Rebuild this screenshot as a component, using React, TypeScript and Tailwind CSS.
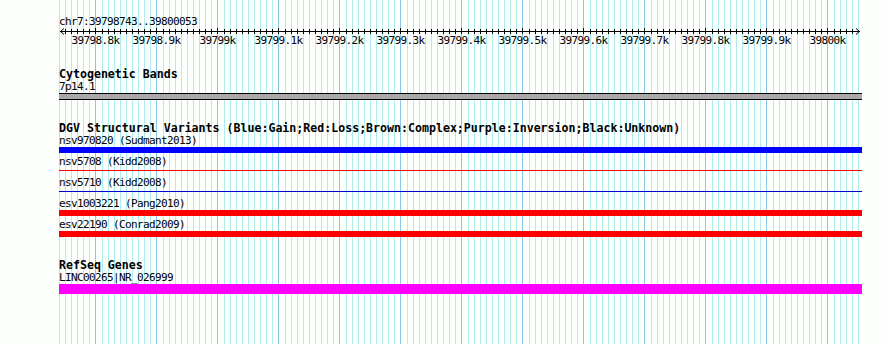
import React from 'react';

// grid + ruler geometry (page pixels)
const MAJOR_X = 95;
const STEP = 6.1;
const TICKS = Array.from({ length: 132 }, (_, i) => i - 6);
const tickX = (k: number) => Math.ceil(MAJOR_X + k * STEP);

const LABELS = [
  '39798.8k', '39798.9k', '39799k', '39799.1k', '39799.2k', '39799.3k', '39799.4k',
  '39799.5k', '39799.6k', '39799.7k', '39799.8k', '39799.9k', '39800k'
];

const mono = "font-['DejaVu_Sans_Mono','Liberation_Mono',monospace]";
const small = `${mono} text-[11px] tracking-[-0.62px] leading-[13px] h-[13px] whitespace-nowrap text-black`;

const GridLines: React.FC = () => (
  <svg className="absolute inset-0" width={890} height={344}>
    {TICKS.map(k => (
      <line
        key={k}
        x1={tickX(k) + 0.5}
        x2={tickX(k) + 0.5}
        y1={0}
        y2={344}
        stroke={k % 10 === 0 ? '#88c8e8' : '#aeecef'}
        strokeWidth={1}
      />
    ))}
  </svg>
);

const Ruler: React.FC = () => (
  <svg width={890} height={20} className="block">
    <line x1={60} x2={860} y1={3.5} y2={3.5} stroke="#000" />
    <polyline points="64,0.5 60.5,3.5 64,6.5" fill="none" stroke="#000" />
    <polyline points="856,0.5 859.5,3.5 856,6.5" fill="none" stroke="#000" />
    {TICKS.filter(k => tickX(k) > 62 && tickX(k) < 857).map(k => (
      <line
        key={k}
        x1={tickX(k) + 0.5}
        x2={tickX(k) + 0.5}
        y1={k % 10 === 0 ? 0 : 1}
        y2={6}
        stroke="#000"
      />
    ))}
    {LABELS.map((l, i) => (
      <text
        key={l}
        x={tickX(i * 10) + 0.5}
        y={15.5}
        textAnchor="middle"
        fontFamily="DejaVu Sans Mono, Liberation Mono, monospace"
        fontSize={11}
        letterSpacing={-0.62}
        fill="#000"
      >
        {l}
      </text>
    ))}
  </svg>
);

const TrackTitle: React.FC<{ children: React.ReactNode; className?: string }> = ({ children, className }) => (
  <div className={`${mono} font-bold text-[11.6px] leading-[12px] h-[12px] whitespace-nowrap text-black ${className ?? ''}`}>
    {children}
  </div>
);

const FeatureLabel: React.FC<{ children: React.ReactNode }> = ({ children }) => (
  <div className={`${small} relative z-10`}>{children}</div>
);

type Variant = { name: string; kind: 'thick' | 'thin'; color: string };

const VARIANTS: Variant[] = [
  { name: 'nsv970820 (Sudmant2013)', kind: 'thick', color: 'bg-[#0000ff]' },
  { name: 'nsv5708 (Kidd2008)', kind: 'thin', color: 'bg-[#ff0000]' },
  { name: 'nsv5710 (Kidd2008)', kind: 'thin', color: 'bg-[#0000cc]' },
  { name: 'esv1003221 (Pang2010)', kind: 'thick', color: 'bg-[#ff0000]' },
  { name: 'esv22190 (Conrad2009)', kind: 'thick', color: 'bg-[#ff0000]' }
];

export default function App() {
  return (
    <div className="relative w-[890px] h-[344px] overflow-hidden bg-[#fdfffd]">
      <GridLines />
      <div className="relative flex flex-col pt-[15px]">
        <div className={`${small} pl-[59px]`}>chr7:39798743..39800053</div>
        <Ruler />

        <div className="flex flex-col pl-[59px] w-[862px] mt-[20px]">
          {/* Cytogenetic Bands */}
          <TrackTitle>Cytogenetic Bands</TrackTitle>
          <FeatureLabel>7p14.1</FeatureLabel>
          <div className="h-[7px] border-y border-black bg-[#a9a9a9]" />

          {/* DGV */}
          <TrackTitle className="mt-[22px]">
            DGV Structural Variants (Blue:Gain;Red:Loss;Brown:Complex;Purple:Inversion;Black:Unknown)
          </TrackTitle>
          <div className="flex flex-col gap-[2px]">
            {VARIANTS.map(v => (
              <div key={v.name} className="flex flex-col">
                <FeatureLabel>{v.name}</FeatureLabel>
                {v.kind === 'thick' ? (
                  <div className={`h-[6px] ${v.color}`} />
                ) : (
                  <div className="h-[6px] pt-[2px]">
                    <div className={`h-px ${v.color}`} />
                  </div>
                )}
              </div>
            ))}
          </div>

          {/* RefSeq */}
          <TrackTitle className="mt-[22px]">RefSeq Genes</TrackTitle>
          <FeatureLabel>LINC00265|NR_026999</FeatureLabel>
          <div className="h-[10px] bg-[#ff00ff]" />
        </div>
      </div>
    </div>
  );
}
